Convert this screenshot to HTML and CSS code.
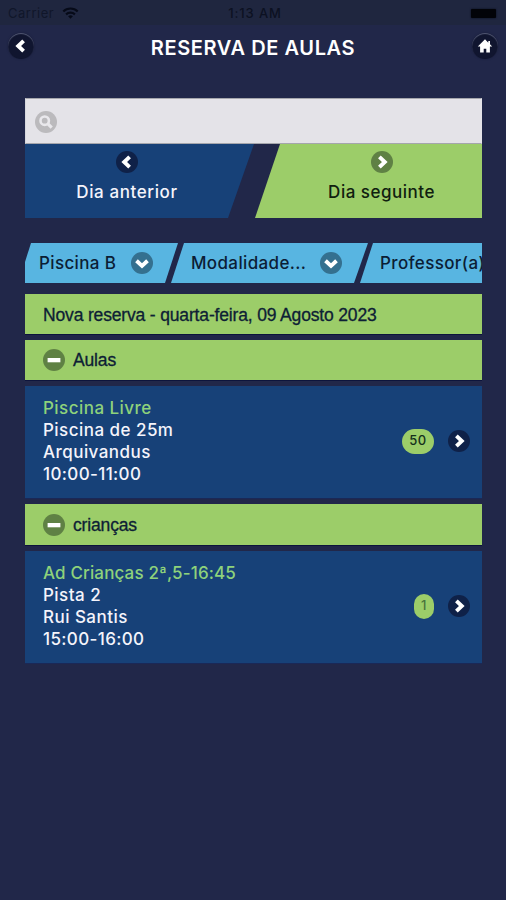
FILE: index.html
```html
<!DOCTYPE html>
<html lang="pt">
<head>
<meta charset="utf-8">
<title>Reserva de aulas</title>
<link rel="stylesheet" href="styles.css">
</head>
<body>
<svg class="defs" aria-hidden="true">
  <symbol id="left" viewBox="0 0 22 22"><path d="M13.600 5.800 8.200 11l5.400 5.200" fill="none" stroke="#fff" stroke-width="3.900"/></symbol>
  <symbol id="right" viewBox="0 0 22 22"><path d="M8.400 5.800 13.800 11l-5.400 5.200" fill="none" stroke="#fff" stroke-width="3.900"/></symbol>
  <symbol id="down" viewBox="0 0 22 22"><path d="M5.500 8.800 11 13.900l5.500-5.100" fill="none" stroke="#fff" stroke-width="3.900"/></symbol>
  <symbol id="minus" viewBox="0 0 22 22"><path d="M4.600 9h12.800v4.300H4.600z" fill="#fff"/></symbol>
  <symbol id="home" viewBox="0 0 22 22"><path d="M11 4.300 3.800 11.500h2.300v5.900h3.600v-3.600h2.600v3.600h3.600v-5.900h2.300L16 9.300V6h-1.700v1.700z" fill="#fff"/></symbol>
  <symbol id="search" viewBox="0 0 22 22"><circle cx="9.700" cy="9.700" r="4.200" fill="none" stroke="#e9e8ec" stroke-width="2.600"/><path d="m12.700 12.700 4 4" stroke="#e9e8ec" stroke-width="3.200"/></symbol>
</svg>
<div class="status">
  <div class="carrier"><span>Carrier</span>
    <svg class="wifi" viewBox="0 0 18 13"><g fill="none" stroke="currentColor" stroke-width="2.300"><path d="M1.200 4.800a11 11 0 0 1 15.600 0"/><path d="M4.200 8a6.900 6.900 0 0 1 9.600 0"/></g><path d="M9 12.800 6.400 10.100a3.800 3.800 0 0 1 5.200 0z" fill="currentColor"/></svg>
  </div>
  <div class="clock">1:13 AM</div>
  <div class="power"><i class="battery"></i></div>
</div>
<header class="header">
  <a class="round raised"><svg><use href="#left"/></svg></a>
  <h1>RESERVA DE AULAS</h1>
  <a class="round raised"><svg><use href="#home"/></svg></a>
</header>
<main>
  <div class="searchbox"><span class="round grey"><svg><use href="#search"/></svg></span></div>
  <nav class="days">
    <a class="day prev"><span class="round navy"><svg><use href="#left"/></svg></span><span class="prev-label">Dia anterior</span></a>
    <a class="day next"><span class="round olive"><svg><use href="#right"/></svg></span><span class="next-label">Dia seguinte</span></a>
  </nav>
  <div class="filters">
    <div class="filter first"><span>Piscina B</span><span class="round teal"><svg><use href="#down"/></svg></span></div>
    <div class="filter second"><span>Modalidade...</span><span class="round teal"><svg><use href="#down"/></svg></span></div>
    <div class="filter third"><span>Professor(a)</span></div>
  </div>
  <div class="bar date"><span>Nova reserva - quarta-feira, 09 Agosto 2023</span></div>
  <div class="bar"><span class="round olive"><svg><use href="#minus"/></svg></span><span>Aulas</span></div>
  <section class="card">
    <div class="info"><span class="name">Piscina Livre</span><span>Piscina de 25m</span><span>Arquivandus</span><span class="time">10:00-11:00</span></div>
    <span class="badge">50</span><span class="round navy"><svg><use href="#right"/></svg></span>
  </section>
  <div class="bar tall"><span class="round olive"><svg><use href="#minus"/></svg></span><span>crianças</span></div>
  <section class="card">
    <div class="info"><span class="name long">Ad Crianças 2ª,5-16:45</span><span>Pista 2</span><span>Rui Santis</span><span class="time">15:00-16:00</span></div>
    <span class="badge single">1</span><span class="round navy"><svg><use href="#right"/></svg></span>
  </section>
</main>
</body>
</html>
```
FILE: styles.css
```css
* { box-sizing: border-box; }
body { margin: 0; height: 900px; overflow: hidden; background: #212749; font: 500 17px/22px Inter, "Liberation Sans", sans-serif; color: #f4f4fb; }
.defs { display: none; }
span { white-space: nowrap; }
.status { height: 25px; padding: 1px 10px 0 8px; display: grid; grid-template-columns: 1fr auto 1fr; align-items: center; background: #1f263f; color: #0c1122; font: 400 13px/24px Inter, sans-serif; }
.carrier { display: flex; align-items: center; gap: 8px; letter-spacing: .5px; color: #10162a; }
.wifi { width: 17px; height: 12px; color: #060a18; }
.clock { padding-left: 6px; font-weight: 500; letter-spacing: .9px; }
.power { display: flex; justify-content: flex-end; }
.battery { width: 25px; height: 9px; border-radius: 1px; background: #020308; box-shadow: 0 0 2px #070b18; }
.header { height: 73px; padding: 8px 8px 0; display: flex; justify-content: space-between; align-items: flex-start; }
h1 { margin: 4px 0 0; font: 600 20px/22px Inter, sans-serif; letter-spacing: .6px; color: #fff; }
.round { flex: none; width: 22px; height: 22px; border-radius: 50%; display: block; }
.round svg { display: block; width: 22px; height: 22px; }
.raised { width: 26px; height: 26px; padding: 2px; background: #10152f; box-shadow: inset 0 1px 1px #555b77, 0 0 2px #171c38; }
.grey { background: #bbbabd; }
.navy { background: #0f2148; }
.olive { background: #5f8144; }
.teal { background: #34708f; }
main { width: 457px; margin-left: 25px; }
.searchbox { height: 46px; padding: 1px 9px 0; display: flex; align-items: center; background: #e4e3e8; border: 1px solid #a5a6ac; border-right-color: #e4e3e8; border-left-color: #d6d7dd; }
.days { height: 74px; display: flex; justify-content: space-between; }
.day { padding-top: 7px; display: flex; flex-direction: column; align-items: center; gap: 8px; }
.prev { width: 229px; padding-right: 25px; background: #174178; clip-path: polygon(0 0, 100% 0, 203px 100%, 0 100%); }
.next { width: 227px; padding-left: 26px; background: #9ccd69; color: #10200f; clip-path: polygon(25px 0, 100% 0, 100% 100%, 0 100%); }
.prev-label { letter-spacing: .6px; }
.next-label { letter-spacing: .5px; }
.filters { height: 40px; margin: 25px 0 11px; display: flex; overflow: hidden; color: #0b1d35; letter-spacing: .36px; }
.filter { flex: none; height: 40px; display: flex; align-items: center; background: #58b5e1; }
.first { width: 153px; padding-left: 14px; justify-content: space-between; padding-right: 25px; clip-path: polygon(6px 0, 100% 0, 140px 100%, 0 100%, 0 19px); }
.second { width: 197px; margin-left: -7px; padding: 0 26px 0 20px; justify-content: space-between; clip-path: polygon(13px 0, 100% 0, 183px 100%, 0 100%); }
.third { width: 130px; margin-left: -8px; padding-left: 20px; clip-path: polygon(13px 0, 100% 0, 100% 100%, 0 100%); }
.bar { height: 41px; margin-bottom: 5px; padding-left: 18px; display: flex; align-items: center; gap: 8px; background: #9ccd69; border: solid #0d143c; border-width: 0 0 1px; color: #0d2035; font: 400 17.5px/22px "Liberation Sans", sans-serif; letter-spacing: -.16px; -webkit-text-stroke: .3px #0d2035; }
.date { padding-top: 1px; }
.tall { height: 42px; }
.card { height: 113px; margin-bottom: 5px; padding: 0 12px 2px 18px; display: flex; align-items: center; background: #174178; border-bottom: 1px solid #1a2857; }
.info { flex: 1; display: flex; flex-direction: column; align-items: flex-start; letter-spacing: .46px; }
.name { color: #8ed27b; }
.long { letter-spacing: .14px; }
.time { letter-spacing: .37px; }
.badge { height: 25px; width: 32px; margin-right: 14px; border-radius: 13px; background: #9ccd69; color: #15301c; font-size: 13px; line-height: 22px; text-align: center; letter-spacing: .5px; }
.single { width: 20px; border-radius: 10px; color: #48733c; }
```
